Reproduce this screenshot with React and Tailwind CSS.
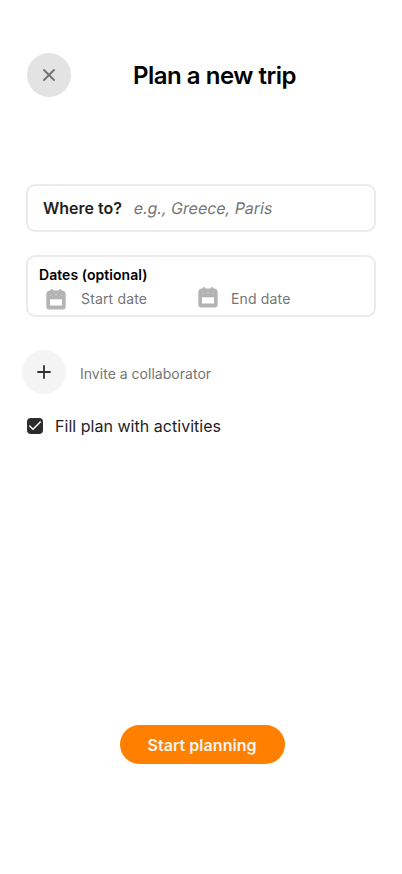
function CalendarIcon({ className }) {
  return (
    <svg className={className} width="20" height="21" viewBox="0 0 20 21" fill="none">
      <path
        d="M4.300 1.500a1.500 1.500 0 0 1 3 0h5.400a1.500 1.500 0 0 1 3 0 4 4 0 0 1 4 3.900v11.800a3.200 3.200 0 0 1-3.200 3.200h-13a3.200 3.200 0 0 1-3.200-3.200V5.400a4 4 0 0 1 4-3.900Z"
        fill="#b3b3b3"
      />
      <path d="M4 10.300h12v6.200H4z" fill="#fff" />
      <path d="M4.200 6.200h1.200M8.700 5.600h2.600M14.600 6.200h1.200" stroke="#d2d2d2" />
    </svg>
  );
}

export default function App() {
  return (
    <main className="h-[874px] w-[402px] overflow-hidden bg-white font-['Inter',sans-serif]">
      <header className="flex items-center pl-[27px] pt-[53px]">
        <button aria-label="Close" className="flex size-11 items-center justify-center rounded-full bg-[#e3e3e3]">
          <svg width="14" height="14" viewBox="0 0 14 14" fill="none" stroke="#757575" strokeWidth="2" strokeLinecap="round">
            <path d="m2 2 10 10M12 2 2 12" />
          </svg>
        </button>
        <h1 className="ml-[62px] whitespace-nowrap text-2xl font-semibold leading-[29px] tracking-[-0.48px] text-black">
          Plan a new trip
        </h1>
      </header>

      <label className="ml-[26px] mt-[87px] flex h-12 w-[350px] items-center rounded-[9px] border-2 border-[#ebebeb] pl-[15px] text-base">
        <span className="font-semibold text-[#1e1e1e]">Where to?</span>
        <span className="ml-3 inline-block -skew-x-[10deg] tracking-[-0.03px] text-[#757575]">e.g., Greece, Paris</span>
      </label>

      <section className="ml-[26px] mt-[23px] h-[62px] w-[350px] rounded-[9px] border-2 border-[#ebebeb] pl-[11px] pt-2">
        <h2 className="text-sm font-semibold leading-5 tracking-[0.05px] text-black">Dates (optional)</h2>
        <div className="ml-[7px] mt-0.5 flex h-6 items-center text-sm tracking-[0.16px] text-[#757575]">
          <CalendarIcon className="mt-px" />
          <span className="ml-[15px] w-[117px]">Start date</span>
          <CalendarIcon className="-mt-[3px]" />
          <span className="ml-[13px]">End date</span>
        </div>
      </section>

      <div className="ml-[22px] mt-[33px] flex items-center">
        <button aria-label="Add collaborator" className="flex size-11 items-center justify-center rounded-full bg-[#f4f4f4]">
          <svg width="14" height="14" viewBox="0 0 14 14" fill="none" stroke="#303030" strokeWidth="1.800" strokeLinecap="round">
            <path d="M7 1v12M1 7h12" />
          </svg>
        </button>
        <span className="ml-3.5 mt-1 text-sm tracking-[0.02px] text-[#757575]">Invite a collaborator</span>
      </div>

      <label className="ml-[27px] mt-5 flex h-6 items-center text-base text-[#1e1e1e]">
        <span className="flex size-4 items-center justify-center rounded bg-[#2c2c2c]">
          <svg width="16" height="16" viewBox="0 0 16 16" fill="none" stroke="#f5f5f5" strokeWidth="1.600" strokeLinecap="round" strokeLinejoin="round">
            <path d="m13.300 4-7.300 7.300L2.700 8" />
          </svg>
        </span>
        <span className="ml-3 tracking-[0.03px]">Fill plan with activities</span>
      </label>

      <button className="ml-[120px] mt-[287px] flex h-[39px] w-[165px] items-center justify-center rounded-full bg-[#ff8000] pr-px text-base font-semibold tracking-[0.04px] text-[#f5f5f5]">
        Start planning
      </button>
    </main>
  );
}
